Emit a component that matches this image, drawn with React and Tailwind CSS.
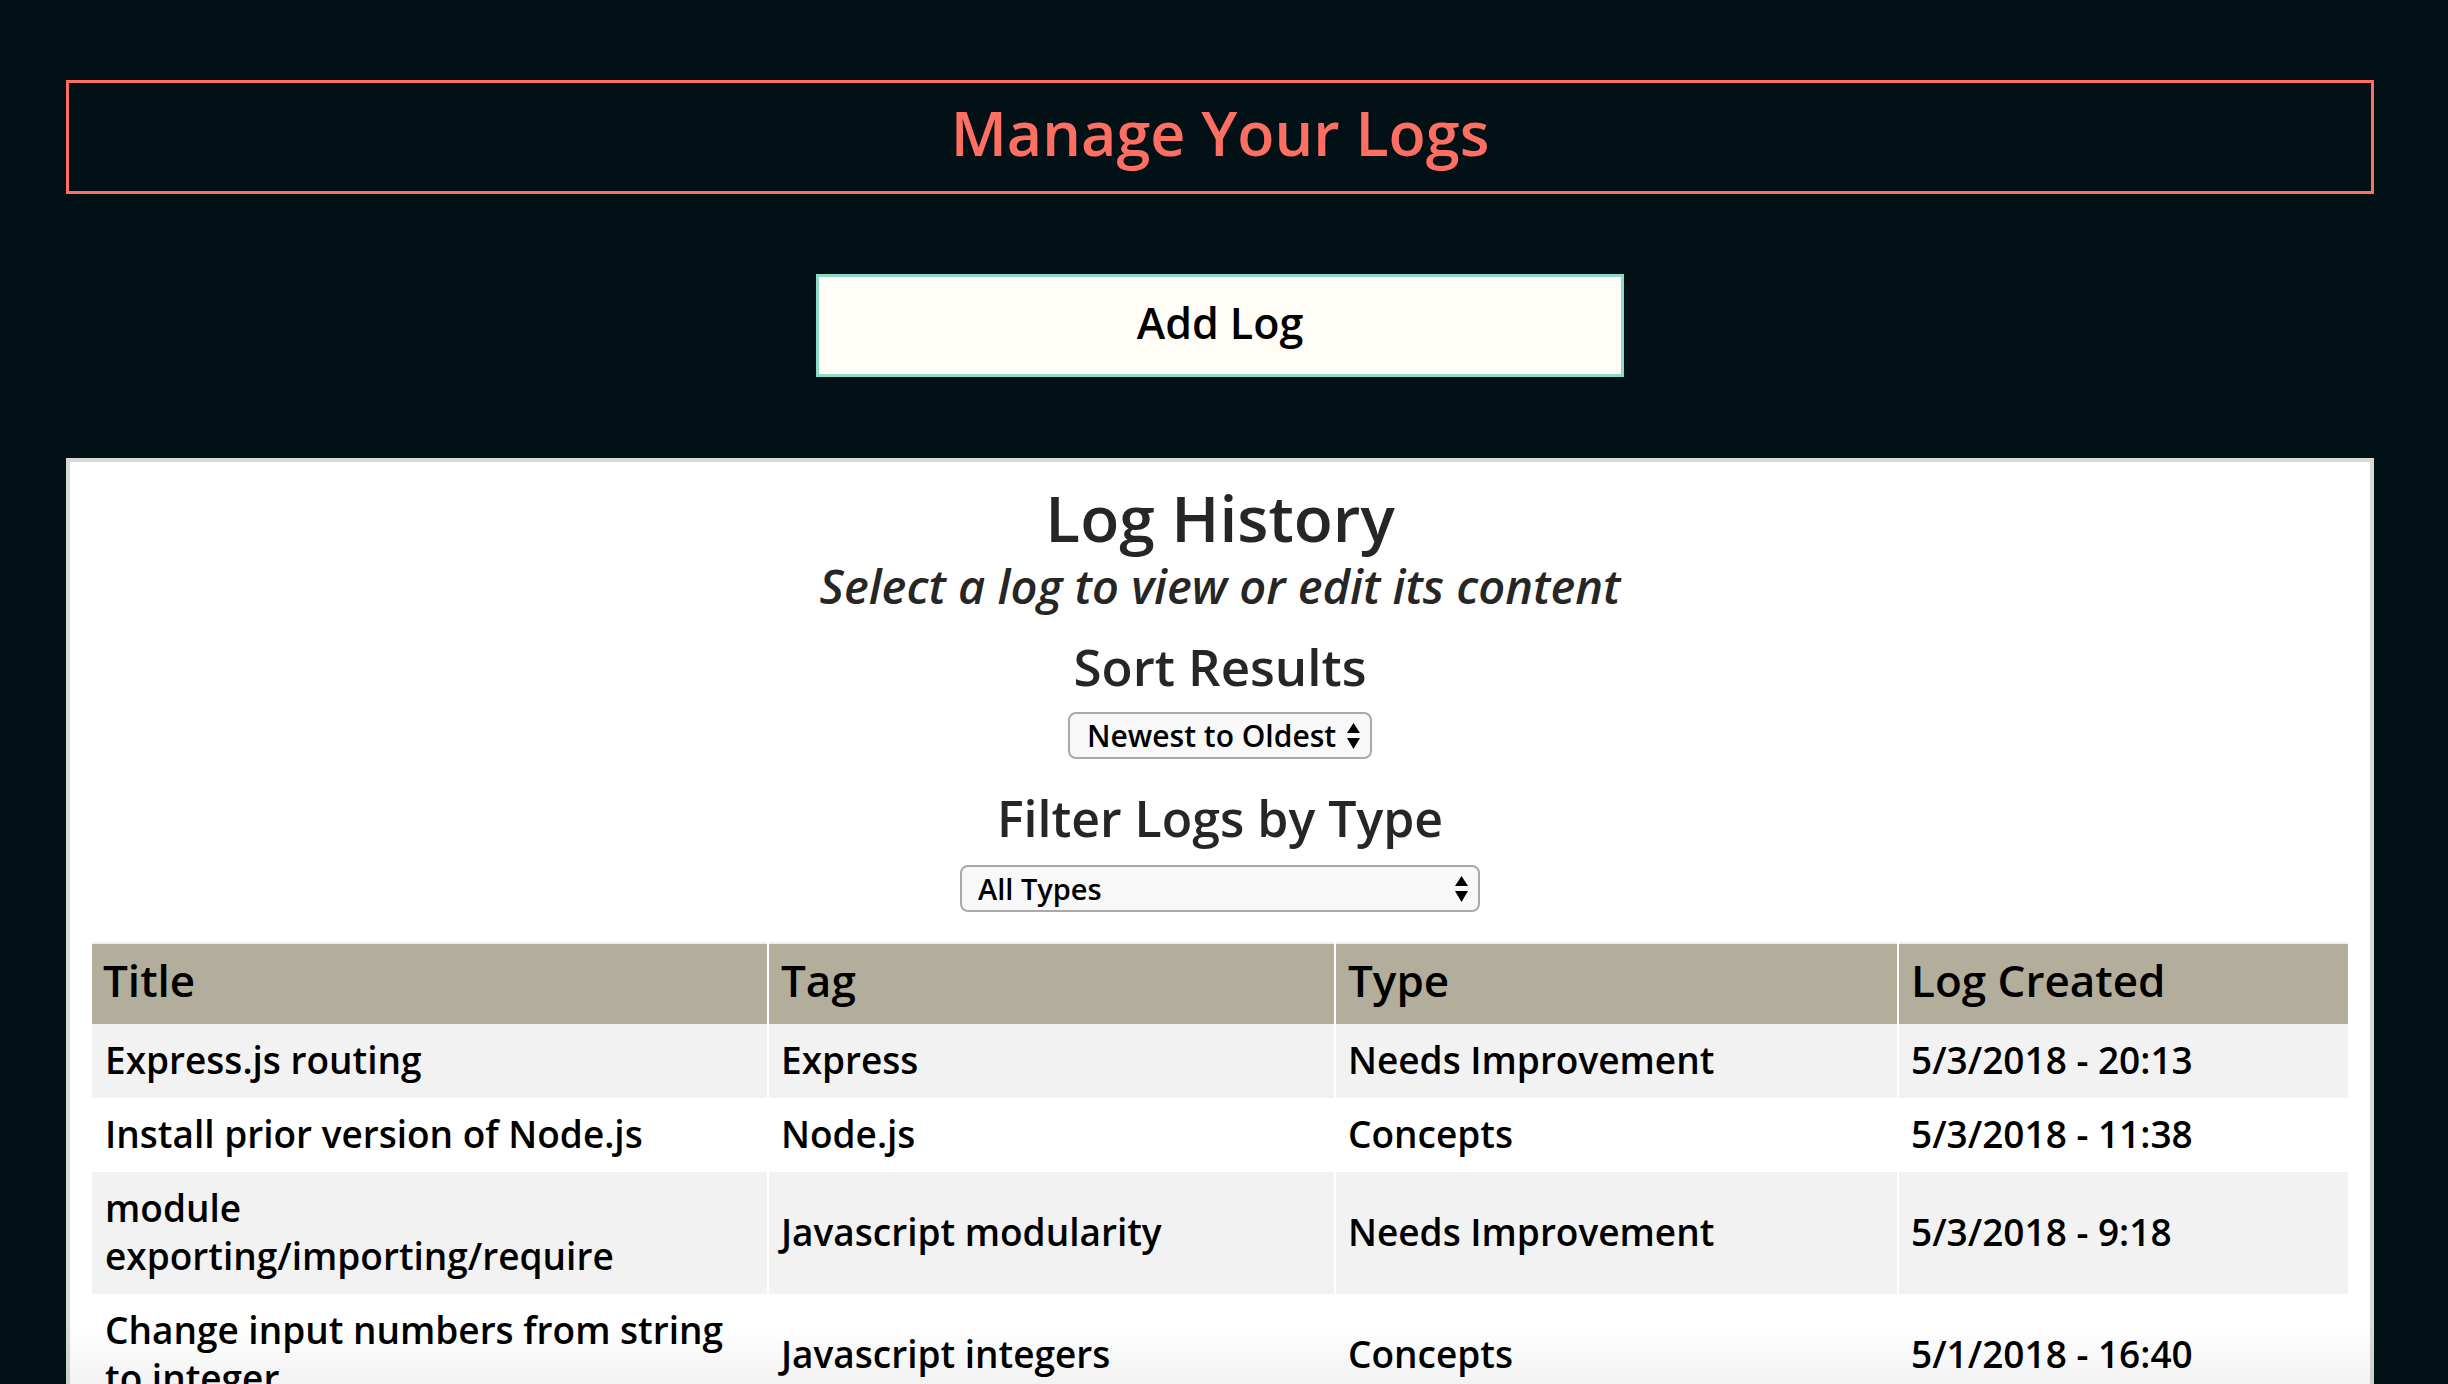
import React from 'react';

const logs = [
  { title: ['Express.js routing'], tag: 'Express', type: 'Needs Improvement', created: '5/3/2018 - 20:13' },
  { title: ['Install prior version of Node.js'], tag: 'Node.js', type: 'Concepts', created: '5/3/2018 - 11:38' },
  { title: ['module', 'exporting/importing/require'], tag: 'Javascript modularity', type: 'Needs Improvement', created: '5/3/2018 - 9:18' },
  { title: ['Change input numbers from string', 'to integer'], tag: 'Javascript integers', type: 'Concepts', created: '5/1/2018 - 16:40' },
];

const Arrows = () => (
  <svg width="15" height="28" viewBox="0 0 15 28" className="shrink-0">
    <polygon points="7.5,1 14,11 1,11" fill="#000" />
    <polygon points="1,16 14,16 7.5,27" fill="#000" />
  </svg>
);

const App = () => {
  return (
    <div className="relative h-[1384px] overflow-hidden bg-[#011116] font-['Open_Sans',sans-serif] font-semibold pt-[80px]">
      <div className="ml-[66px] w-[2308px]">
        {/* Page header */}
        <div className="h-[114px] border-[3px] border-[#ff6f61] flex items-center justify-center pb-[8px]">
          <h1 className="text-[61px] text-[#ff6f61]">Manage Your Logs</h1>
        </div>

        <div className="mt-[80px] mx-auto w-[808px] h-[103px] bg-[#fffdf5] border-[3px] border-[#8adcc8] flex items-center justify-center pb-[5px]">
          <span className="text-[43px] text-black">Add Log</span>
        </div>

        {/* Log history panel */}
        <div className="mt-[81px] bg-white border-[4px] border-[#d8d8d4] px-[22px] pt-[16px] pb-[40px] text-center">
          <h2 className="text-[64px] leading-[80px] text-[#262626]">Log History</h2>
          <p className="mt-[2px] text-[47px] leading-[52px] italic text-[#262626]">Select a log to view or edit its content</p>

          <h3 className="mt-[22px] text-[51px] leading-[64px] text-[#262626]">Sort Results</h3>
          <div className="mt-[14px] mx-auto w-[304px] h-[47px] rounded-[8px] border-2 border-[#a9a9a9] bg-[#f8f8f8] flex items-center justify-between pl-[17px] pr-[9px]">
            <span className="text-[30px] text-black">Newest to Oldest</span>
            <Arrows />
          </div>

          <h3 className="mt-[27px] text-[50px] leading-[64px] text-[#262626]">Filter Logs by Type</h3>
          <div className="mt-[15px] mx-auto w-[520px] h-[47px] rounded-[8px] border-2 border-[#a9a9a9] bg-[#f8f8f8] flex items-center justify-between pl-[16px] pr-[9px]">
            <span className="text-[29px] text-black">All Types</span>
            <Arrows />
          </div>

          <table className="mt-[30px] w-[2256px] table-fixed border-collapse border-t-2 border-[#eeeeee] text-left text-black">
            <colgroup>
              <col className="w-[676px]" />
              <col className="w-[567px]" />
              <col className="w-[563px]" />
              <col className="w-[450px]" />
            </colgroup>
            <thead>
              <tr className="bg-[#b2ae9b] h-[80px]">
                <th className="font-semibold text-[44px] leading-[72px] pb-[8px] pl-[11px] align-middle">Title</th>
                <th className="font-semibold text-[44px] leading-[72px] pb-[8px] pl-[12px] align-middle border-l-2 border-white">Tag</th>
                <th className="font-semibold text-[44px] leading-[72px] pb-[8px] pl-[12px] align-middle border-l-2 border-white">Type</th>
                <th className="font-semibold text-[44px] leading-[72px] pb-[8px] pl-[12px] align-middle border-l-2 border-white">Log Created</th>
              </tr>
            </thead>
            <tbody>
              {logs.map((log, i) => (
                <tr key={i} className={i % 2 === 0 ? 'bg-[#f2f2f2]' : 'bg-white'}>
                  <td className="text-[37px] leading-[48px] pt-[12px] pb-[14px] pl-[13px] pr-[12px] align-middle">
                    {log.title.map((line, j) => (
                      <div key={j}>{line}</div>
                    ))}
                  </td>
                  <td className="text-[37px] leading-[48px] pt-[12px] pb-[14px] pl-[12px] align-middle border-l-2 border-white">{log.tag}</td>
                  <td className="text-[37px] leading-[48px] pt-[12px] pb-[14px] pl-[12px] align-middle border-l-2 border-white">{log.type}</td>
                  <td className="text-[37px] leading-[48px] pt-[12px] pb-[14px] pl-[12px] align-middle border-l-2 border-white">{log.created}</td>
                </tr>
              ))}
            </tbody>
          </table>
        </div>
      </div>

      {/* fade at the bottom edge */}
      <div className="pointer-events-none absolute bottom-0 left-0 right-0 h-[60px] bg-gradient-to-b from-transparent to-[rgba(0,0,0,0.05)]" />
    </div>
  );
};

export default App;
